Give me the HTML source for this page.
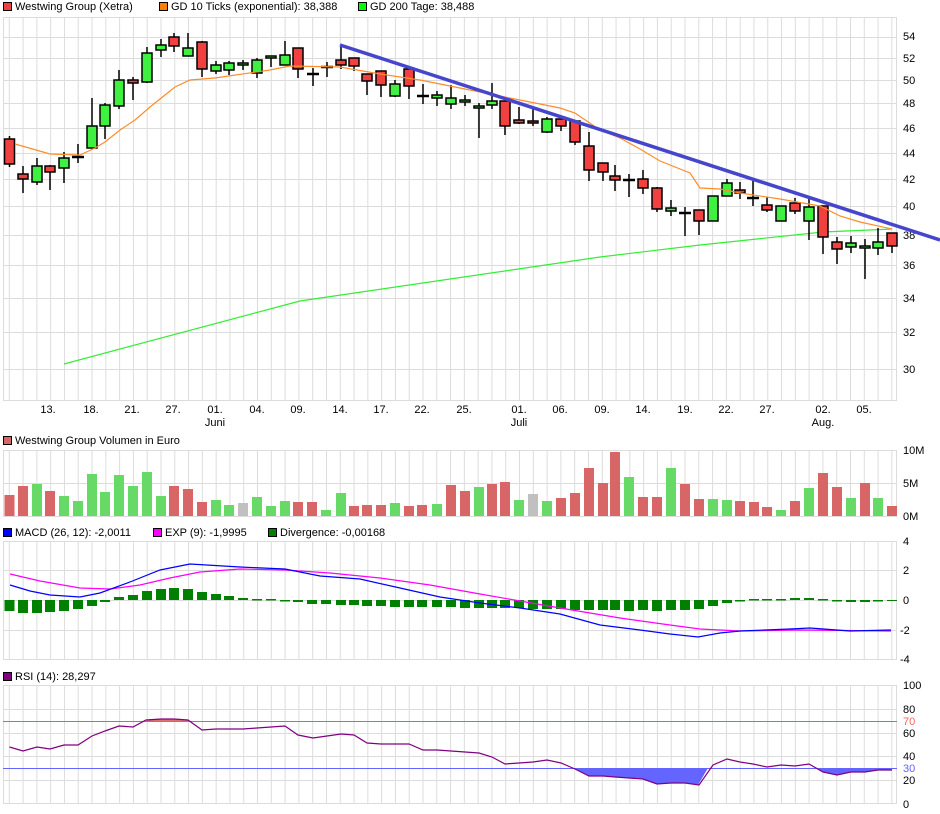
<!DOCTYPE html>
<html><head><meta charset="utf-8"><style>
html,body{margin:0;padding:0;background:#fff;}
svg{display:block;font-family:"Liberation Sans",sans-serif;font-size:11px;}
</style></head><body>
<svg width="940" height="814" viewBox="0 0 940 814" xmlns="http://www.w3.org/2000/svg">
<defs>
<pattern id="vg" x="2.4" y="0" width="13.79" height="10" patternUnits="userSpaceOnUse"><rect x="6.4" y="0" width="1" height="10" fill="#dcdcdc"/></pattern>
</defs>
<!-- legends -->
<g fill="#000">
<rect x="3.5" y="2.5" width="8" height="8" fill="#f04040" stroke="#000"/><text x="15" y="10">Westwing Group (Xetra)</text>
<rect x="159.5" y="2.5" width="8" height="8" fill="#ff8000" stroke="#000"/><text x="171" y="10">GD 10 Ticks (exponential): 38,388</text>
<rect x="358.5" y="2.5" width="8" height="8" fill="#00ff00" stroke="#000"/><text x="370" y="10">GD 200 Tage: 38,488</text>
<rect x="3.5" y="436.5" width="8" height="8" fill="#d96666" stroke="#000"/><text x="15" y="444">Westwing Group Volumen in Euro</text>
<rect x="3.5" y="528.5" width="8" height="8" fill="#0000ff" stroke="#000"/><text x="15" y="536">MACD (26, 12): -2,0011</text>
<rect x="153.5" y="528.5" width="8" height="8" fill="#ff00ff" stroke="#000"/><text x="165" y="536">EXP (9): -1,9995</text>
<rect x="268.5" y="528.5" width="8" height="8" fill="#008000" stroke="#000"/><text x="280" y="536">Divergence: -0,00168</text>
<rect x="3.5" y="672.5" width="8" height="8" fill="#800080" stroke="#000"/><text x="15" y="680">RSI (14): 28,297</text>
</g>

<!-- main grid -->
<rect x="3" y="17" width="894" height="383" fill="url(#vg)"/>
<g stroke="#dcdcdc" stroke-width="1">
<line x1="3" y1="17.5" x2="897" y2="17.5"/>
<line x1="3" y1="37.5" x2="897" y2="37.5"/><line x1="3" y1="58.5" x2="897" y2="58.5"/><line x1="3" y1="80.5" x2="897" y2="80.5"/><line x1="3" y1="103.5" x2="897" y2="103.5"/><line x1="3" y1="128.5" x2="897" y2="128.5"/><line x1="3" y1="153.5" x2="897" y2="153.5"/><line x1="3" y1="179.5" x2="897" y2="179.5"/><line x1="3" y1="206.5" x2="897" y2="206.5"/><line x1="3" y1="235.5" x2="897" y2="235.5"/><line x1="3" y1="265.5" x2="897" y2="265.5"/><line x1="3" y1="298.5" x2="897" y2="298.5"/><line x1="3" y1="332.5" x2="897" y2="332.5"/><line x1="3" y1="369.5" x2="897" y2="369.5"/>
<line x1="3" y1="400.5" x2="897" y2="400.5"/>
<line x1="3.5" y1="17" x2="3.5" y2="400"/><line x1="896.5" y1="17" x2="896.5" y2="400"/>
</g>
<g fill="#000">
<text x="903" y="40">54</text><text x="903" y="62">52</text><text x="903" y="84">50</text><text x="903" y="107">48</text><text x="903" y="132">46</text><text x="903" y="157">44</text><text x="903" y="183">42</text><text x="903" y="210">40</text><text x="903" y="239">38</text><text x="903" y="269">36</text><text x="903" y="302">34</text><text x="903" y="336">32</text><text x="903" y="373">30</text>
</g>
<g fill="#000" text-anchor="middle">
<text x="48" y="413">13.</text><text x="91" y="413">18.</text><text x="132" y="413">21.</text><text x="173" y="413">27.</text><text x="215" y="413">01.</text><text x="257" y="413">04.</text><text x="298" y="413">09.</text><text x="340" y="413">14.</text><text x="381" y="413">17.</text><text x="422" y="413">22.</text><text x="464" y="413">25.</text><text x="519" y="413">01.</text><text x="560" y="413">06.</text><text x="602" y="413">09.</text><text x="643" y="413">14.</text><text x="685" y="413">19.</text><text x="726" y="413">22.</text><text x="767" y="413">27.</text><text x="823" y="413">02.</text><text x="864" y="413">05.</text>
<text x="215" y="426">Juni</text><text x="519" y="426">Juli</text><text x="823" y="426">Aug.</text>
</g>

<!-- GD200 -->
<polyline fill="none" stroke="#33ee33" stroke-width="1.2" points="64,364 300,301 600,257 700,245 823,232 892,229"/>
<!-- candles: wicks -->
<g stroke="#000" stroke-width="1.5">
<line x1="9.5" y1="136" x2="9.5" y2="167"/><line x1="23" y1="166" x2="23" y2="193"/><line x1="37" y1="158" x2="37" y2="185"/><line x1="50" y1="165" x2="50" y2="190"/><line x1="64" y1="152" x2="64" y2="183"/><line x1="78" y1="144" x2="78" y2="163"/><line x1="92" y1="98" x2="92" y2="148"/><line x1="105" y1="103" x2="105" y2="139"/><line x1="119" y1="70" x2="119" y2="109"/><line x1="133" y1="77" x2="133" y2="100"/><line x1="147" y1="47" x2="147" y2="83"/><line x1="161" y1="39" x2="161" y2="57"/><line x1="174" y1="33" x2="174" y2="52"/><line x1="188" y1="33" x2="188" y2="56"/><line x1="202" y1="41" x2="202" y2="77"/><line x1="216" y1="61" x2="216" y2="74"/><line x1="229" y1="61" x2="229" y2="75"/><line x1="243" y1="60" x2="243" y2="70"/><line x1="257" y1="58" x2="257" y2="78"/><line x1="271" y1="56" x2="271" y2="67"/><line x1="285" y1="41" x2="285" y2="65"/><line x1="298" y1="48" x2="298" y2="78"/><line x1="313" y1="68" x2="313" y2="86"/><line x1="327" y1="62" x2="327" y2="77"/><line x1="341" y1="45" x2="341" y2="69"/><line x1="354" y1="58" x2="354" y2="71"/><line x1="367" y1="74" x2="367" y2="95"/><line x1="381" y1="71" x2="381" y2="97"/><line x1="395" y1="80" x2="395" y2="97"/><line x1="409" y1="69" x2="409" y2="99"/><line x1="423" y1="84" x2="423" y2="104"/><line x1="437" y1="91" x2="437" y2="106"/><line x1="451" y1="85" x2="451" y2="109"/><line x1="465" y1="95" x2="465" y2="106"/><line x1="479" y1="103" x2="479" y2="138"/><line x1="492" y1="83" x2="492" y2="109"/><line x1="505" y1="101" x2="505" y2="135"/><line x1="519" y1="107" x2="519" y2="124"/><line x1="533" y1="108" x2="533" y2="126"/><line x1="547" y1="117" x2="547" y2="133"/><line x1="561" y1="119" x2="561" y2="131"/><line x1="575" y1="121" x2="575" y2="145"/><line x1="589" y1="132" x2="589" y2="181"/><line x1="603" y1="163" x2="603" y2="181"/><line x1="615" y1="165" x2="615" y2="191"/><line x1="629" y1="174" x2="629" y2="197"/><line x1="643" y1="170" x2="643" y2="194"/><line x1="657" y1="187" x2="657" y2="212"/><line x1="671" y1="200" x2="671" y2="216"/><line x1="685" y1="207" x2="685" y2="236"/><line x1="699" y1="210" x2="699" y2="235"/><line x1="713" y1="196" x2="713" y2="221"/><line x1="727" y1="179" x2="727" y2="196"/><line x1="740" y1="182" x2="740" y2="199"/><line x1="753" y1="181" x2="753" y2="206"/><line x1="767" y1="197" x2="767" y2="212"/><line x1="781" y1="206" x2="781" y2="221"/><line x1="795" y1="198" x2="795" y2="214"/><line x1="809" y1="197" x2="809" y2="240"/><line x1="823" y1="206" x2="823" y2="254"/><line x1="837" y1="237" x2="837" y2="264"/><line x1="851" y1="236" x2="851" y2="253"/><line x1="865" y1="239" x2="865" y2="279"/><line x1="878" y1="228" x2="878" y2="255"/><line x1="892" y1="233" x2="892" y2="253"/>
</g>
<!-- crosses -->
<g stroke="#000" stroke-width="2.5">
<line x1="72" y1="157" x2="84" y2="157"/><line x1="307" y1="74" x2="319" y2="74"/><line x1="321" y1="67" x2="333" y2="67"/><line x1="417" y1="96" x2="429" y2="96"/><line x1="623" y1="180" x2="635" y2="180"/><line x1="679" y1="213" x2="691" y2="213"/><line x1="747" y1="198" x2="759" y2="198"/>
</g>
<g stroke="#000" stroke-width="1.5">
<rect x="4.5" y="139" width="10" height="25" fill="#f04040"/><rect x="18" y="174" width="10" height="5" fill="#f04040"/><rect x="32" y="166" width="10" height="16" fill="#40f040"/><rect x="45" y="166" width="10" height="6" fill="#f04040"/><rect x="59" y="158" width="10" height="10" fill="#40f040"/><rect x="87" y="126" width="10" height="22" fill="#40f040"/><rect x="100" y="105" width="10" height="21" fill="#40f040"/><rect x="114" y="80" width="10" height="26" fill="#40f040"/><rect x="128" y="80" width="10" height="3" fill="#f04040"/><rect x="142" y="53" width="10" height="29" fill="#40f040"/><rect x="156" y="45" width="10" height="5" fill="#40f040"/><rect x="169" y="37" width="10" height="9" fill="#f04040"/><rect x="183" y="48" width="10" height="8" fill="#40f040"/><rect x="197" y="42" width="10" height="27" fill="#f04040"/><rect x="211" y="65" width="10" height="6" fill="#40f040"/><rect x="224" y="63" width="10" height="7" fill="#40f040"/><rect x="238" y="63" width="10" height="2" fill="#40f040"/><rect x="252" y="60" width="10" height="13" fill="#40f040"/><rect x="266" y="56" width="10" height="2" fill="#40f040"/><rect x="280" y="55" width="10" height="10" fill="#40f040"/><rect x="293" y="48" width="10" height="21" fill="#f04040"/>
<rect x="336" y="60" width="10" height="5" fill="#f04040"/><rect x="349" y="58" width="10" height="8" fill="#f04040"/><rect x="362" y="74" width="10" height="7" fill="#f04040"/><rect x="376" y="71" width="10" height="14" fill="#f04040"/><rect x="390" y="84" width="10" height="12" fill="#40f040"/><rect x="404" y="69" width="10" height="17" fill="#f04040"/><rect x="432" y="95" width="10" height="3" fill="#40f040"/><rect x="446" y="98" width="10" height="6" fill="#40f040"/><rect x="460" y="100" width="10" height="2" fill="#40f040"/><rect x="474" y="106" width="10" height="2" fill="#40f040"/><rect x="487" y="101" width="10" height="4" fill="#40f040"/><rect x="500" y="101" width="10" height="25" fill="#f04040"/><rect x="514" y="120" width="10" height="3" fill="#f04040"/><rect x="528" y="121" width="10" height="2" fill="#f04040"/><rect x="542" y="119" width="10" height="13" fill="#40f040"/><rect x="556" y="119" width="10" height="7" fill="#f04040"/><rect x="570" y="121" width="10" height="21" fill="#f04040"/><rect x="584" y="146" width="10" height="24" fill="#f04040"/><rect x="598" y="163" width="10" height="9" fill="#f04040"/><rect x="610" y="176" width="10" height="4" fill="#f04040"/><rect x="638" y="179" width="10" height="9" fill="#f04040"/><rect x="652" y="188" width="10" height="21" fill="#f04040"/><rect x="666" y="208" width="10" height="3" fill="#40f040"/><rect x="694" y="210" width="10" height="11" fill="#f04040"/><rect x="708" y="196" width="10" height="25" fill="#40f040"/><rect x="722" y="183" width="10" height="13" fill="#40f040"/><rect x="735" y="190" width="10" height="3" fill="#f04040"/><rect x="762" y="205" width="10" height="5" fill="#f04040"/><rect x="776" y="206" width="10" height="15" fill="#40f040"/><rect x="790" y="203" width="10" height="8" fill="#f04040"/><rect x="804" y="207" width="10" height="14" fill="#40f040"/><rect x="818" y="206" width="10" height="31" fill="#f04040"/><rect x="832" y="242" width="10" height="7" fill="#f04040"/><rect x="846" y="243" width="10" height="4" fill="#40f040"/><rect x="860" y="246" width="10" height="2" fill="#40f040"/><rect x="873" y="242" width="10" height="6" fill="#40f040"/><rect x="887" y="233" width="10" height="13" fill="#f04040"/>
</g>
<!-- EMA -->
<polyline fill="none" stroke="#ff8c2a" stroke-width="1.2" points="15,144 50,154 80,155 95,148 105,142 120,130 135,120 150,107 165,95 175,87 190,80 215,78 270,70 290,66 340,67 380,74 420,80 480,92 530,102 560,108 575,113 600,130 620,138 640,149 660,161 690,173 700,188 720,189 740,193 780,199 820,206 840,216 860,222 892,229"/>
<!-- trendline -->
<line x1="340" y1="45" x2="940" y2="240" stroke="#4646cc" stroke-width="3.5"/>

<!-- volume panel -->
<rect x="3" y="450" width="894" height="67" fill="url(#vg)"/>
<g stroke="#dcdcdc"><line x1="3" y1="450.5" x2="897" y2="450.5"/><line x1="3" y1="483.5" x2="897" y2="483.5"/><line x1="3" y1="516.5" x2="897" y2="516.5"/><line x1="3.5" y1="450" x2="3.5" y2="517"/><line x1="896.5" y1="450" x2="896.5" y2="517"/></g>
<text x="903" y="454">10M</text><text x="903" y="487">5M</text><text x="903" y="520">0M</text>
<g fill="#d96666">
<rect x="4.5" y="495" width="10" height="21"/><rect x="18" y="486" width="10" height="30"/><rect x="45" y="491" width="10" height="25"/><rect x="169" y="486" width="10" height="30"/><rect x="183" y="489" width="10" height="27"/><rect x="197" y="502" width="10" height="14"/><rect x="293" y="502" width="10" height="14"/><rect x="307" y="502" width="10" height="14"/><rect x="349" y="506" width="10" height="10"/><rect x="362" y="505" width="10" height="11"/><rect x="376" y="505" width="10" height="11"/><rect x="404" y="506" width="10" height="10"/><rect x="417" y="505" width="10" height="11"/><rect x="446" y="485" width="10" height="31"/><rect x="460" y="491" width="10" height="25"/><rect x="487" y="484" width="10" height="32"/><rect x="500" y="482" width="10" height="34"/><rect x="556" y="498" width="10" height="18"/><rect x="570" y="493" width="10" height="23"/><rect x="584" y="468" width="10" height="48"/><rect x="598" y="483" width="10" height="33"/><rect x="610" y="452" width="10" height="64"/><rect x="638" y="497" width="10" height="19"/><rect x="652" y="497" width="10" height="19"/><rect x="680" y="484" width="10" height="32"/><rect x="694" y="499" width="10" height="17"/><rect x="735" y="501" width="10" height="15"/><rect x="749" y="502" width="10" height="14"/><rect x="762" y="507" width="10" height="9"/><rect x="790" y="501" width="10" height="15"/><rect x="818" y="473" width="10" height="43"/><rect x="832" y="487" width="10" height="29"/><rect x="860" y="483" width="10" height="33"/><rect x="887" y="506" width="10" height="10"/>
</g>
<g fill="#66d966">
<rect x="32" y="484" width="10" height="32"/><rect x="59" y="496" width="10" height="20"/><rect x="73" y="501" width="10" height="15"/><rect x="87" y="474" width="10" height="42"/><rect x="100" y="492" width="10" height="24"/><rect x="114" y="475" width="10" height="41"/><rect x="128" y="486" width="10" height="30"/><rect x="142" y="472" width="10" height="44"/><rect x="156" y="496" width="10" height="20"/><rect x="211" y="500" width="10" height="16"/><rect x="224" y="505" width="10" height="11"/><rect x="252" y="497" width="10" height="19"/><rect x="266" y="506" width="10" height="10"/><rect x="280" y="501" width="10" height="15"/><rect x="321" y="510" width="10" height="6"/><rect x="336" y="493" width="10" height="23"/><rect x="390" y="503" width="10" height="13"/><rect x="432" y="504" width="10" height="12"/><rect x="474" y="487" width="10" height="29"/><rect x="514" y="500" width="10" height="16"/><rect x="542" y="501" width="10" height="15"/><rect x="624" y="477" width="10" height="39"/><rect x="666" y="468" width="10" height="48"/><rect x="708" y="499" width="10" height="17"/><rect x="722" y="500" width="10" height="16"/><rect x="776" y="510" width="10" height="6"/><rect x="804" y="488" width="10" height="28"/><rect x="846" y="498" width="10" height="18"/><rect x="873" y="498" width="10" height="18"/>
</g>
<g fill="#c0c0c0"><rect x="238" y="503" width="10" height="13"/><rect x="528" y="494" width="10" height="22"/></g>

<!-- MACD panel -->
<rect x="3" y="541" width="894" height="119" fill="url(#vg)"/>
<g stroke="#dcdcdc"><line x1="3" y1="541.5" x2="897" y2="541.5"/><line x1="3" y1="570.5" x2="897" y2="570.5"/><line x1="3" y1="600.5" x2="897" y2="600.5"/><line x1="3" y1="630.5" x2="897" y2="630.5"/><line x1="3" y1="659.5" x2="897" y2="659.5"/><line x1="3.5" y1="541" x2="3.5" y2="660"/><line x1="896.5" y1="541" x2="896.5" y2="660"/></g>
<text x="903" y="545">4</text><text x="903" y="574">2</text><text x="903" y="604">0</text><text x="900" y="634">-2</text><text x="900" y="663">-4</text>
<g fill="#008000">
<rect x="4.5" y="600" width="10" height="11"/><rect x="18" y="600" width="10" height="13"/><rect x="32" y="600" width="10" height="13"/><rect x="45" y="600" width="10" height="12"/><rect x="59" y="600" width="10" height="11"/><rect x="73" y="600" width="10" height="9"/><rect x="87" y="600" width="10" height="6"/><rect x="100" y="600" width="10" height="2"/><rect x="114" y="597" width="10" height="3"/><rect x="128" y="595" width="10" height="5"/><rect x="142" y="591" width="10" height="9"/><rect x="156" y="589" width="10" height="11"/><rect x="169" y="588" width="10" height="12"/><rect x="183" y="589" width="10" height="11"/><rect x="197" y="592" width="10" height="8"/><rect x="211" y="594" width="10" height="6"/><rect x="224" y="596" width="10" height="4"/><rect x="238" y="598" width="10" height="2"/><rect x="252" y="599" width="10" height="1.5"/><rect x="266" y="599" width="10" height="1.5"/><rect x="280" y="600" width="10" height="1.5"/><rect x="293" y="600" width="10" height="2"/><rect x="307" y="600" width="10" height="4"/><rect x="321" y="600" width="10" height="4"/><rect x="336" y="600" width="10" height="5"/><rect x="349" y="600" width="10" height="5"/><rect x="362" y="600" width="10" height="6"/><rect x="376" y="600" width="10" height="6"/><rect x="390" y="600" width="10" height="7"/><rect x="404" y="600" width="10" height="7"/><rect x="417" y="600" width="10" height="7"/><rect x="432" y="600" width="10" height="7"/><rect x="446" y="600" width="10" height="7"/><rect x="460" y="600" width="10" height="8"/><rect x="474" y="600" width="10" height="8"/><rect x="487" y="600" width="10" height="8"/><rect x="500" y="600" width="10" height="8"/><rect x="514" y="600" width="10" height="8"/><rect x="528" y="600" width="10" height="9"/><rect x="542" y="600" width="10" height="9"/><rect x="556" y="600" width="10" height="9"/><rect x="570" y="600" width="10" height="10"/><rect x="584" y="600" width="10" height="10"/><rect x="598" y="600" width="10" height="10"/><rect x="610" y="600" width="10" height="10"/><rect x="624" y="600" width="10" height="11"/><rect x="638" y="600" width="10" height="10"/><rect x="652" y="600" width="10" height="11"/><rect x="666" y="600" width="10" height="10"/><rect x="680" y="600" width="10" height="10"/><rect x="694" y="600" width="10" height="9"/><rect x="708" y="600" width="10" height="6"/><rect x="722" y="600" width="10" height="3"/><rect x="735" y="600" width="10" height="1.5"/><rect x="749" y="599" width="10" height="1.5"/><rect x="762" y="599" width="10" height="1.5"/><rect x="776" y="599" width="10" height="1.5"/><rect x="790" y="598" width="10" height="2"/><rect x="804" y="598" width="10" height="2"/><rect x="818" y="599" width="10" height="1.5"/><rect x="832" y="600" width="10" height="1.5"/><rect x="846" y="600" width="10" height="2"/><rect x="860" y="600" width="10" height="2"/><rect x="873" y="600" width="10" height="1.5"/><rect x="887" y="600" width="10" height="1"/>
</g>
<polyline fill="none" stroke="#ff00ff" stroke-width="1.2" points="10,574 40,581 80,588 110,589 140,585 170,578 200,572 240,569 285,570 330,573 380,578 430,585 480,594 520,601 560,608 620,618 670,625 700,629 720,630 740,631 800,630 891,631"/>
<polyline fill="none" stroke="#0000ff" stroke-width="1.2" points="10,585 30,591 50,595 80,597 100,593 130,582 160,570 190,564 240,567 285,569 320,576 360,579 400,588 440,597 480,603 520,608 560,614 600,625 640,630 670,634 698,637 720,633 740,631 790,629 810,628 850,631 891,630"/>

<!-- RSI panel -->
<rect x="3" y="685" width="894" height="119" fill="url(#vg)"/>
<g stroke="#dcdcdc"><line x1="3" y1="685.5" x2="897" y2="685.5"/><line x1="3" y1="709.5" x2="897" y2="709.5"/><line x1="3" y1="733.5" x2="897" y2="733.5"/><line x1="3" y1="756.5" x2="897" y2="756.5"/><line x1="3" y1="780.5" x2="897" y2="780.5"/><line x1="3" y1="803.5" x2="897" y2="803.5"/><line x1="3.5" y1="685" x2="3.5" y2="804"/><line x1="896.5" y1="685" x2="896.5" y2="804"/></g>
<line x1="3" y1="721.5" x2="897" y2="721.5" stroke="#e06060"/>
<polygon fill="#6464ff" points="574,768 588,776 602,776 615,777 629,778 643,779 657,784 671,783 685,783 698,785 708,768"/>
<polygon fill="#6464ff" points="817,768 823,772 837,775 851,772 865,772 878,770 892,770 892,768"/>
<polygon fill="#e07070" points="146,721 150,719 174,719 188,720 190,721"/>
<line x1="3" y1="768.5" x2="897" y2="768.5" stroke="#6464ff"/>
<polyline fill="none" stroke="#800080" stroke-width="1.2" points="9.5,747 23,751 37,747 50,749 64,745 78,745 92,736 105,731 119,726 133,727 146,720 161,719 174,719 188,720 202,730 216,729 229,729 243,729 257,728 271,727 285,726 298,735 313,738 327,736 341,734 354,735 367,743 381,744 395,744 409,744 423,750 437,750 451,751 465,752 479,753 492,757 505,764 519,763 533,762 547,760 561,763 575,769 589,776 603,776 615,777 629,778 643,779 657,784 671,783 685,783 699,785 713,765 727,759 740,762 753,764 767,767 781,765 795,766 809,764 823,772 837,775 851,772 865,772 878,770 892,770"/>
<text x="903" y="689">100</text><text x="903" y="713">80</text><text x="903" y="725" fill="#ff6060">70</text><text x="903" y="737">60</text><text x="903" y="760">40</text><text x="903" y="772" fill="#6464ff">30</text><text x="903" y="784">20</text><text x="903" y="808">0</text>
</svg>
</body></html>
